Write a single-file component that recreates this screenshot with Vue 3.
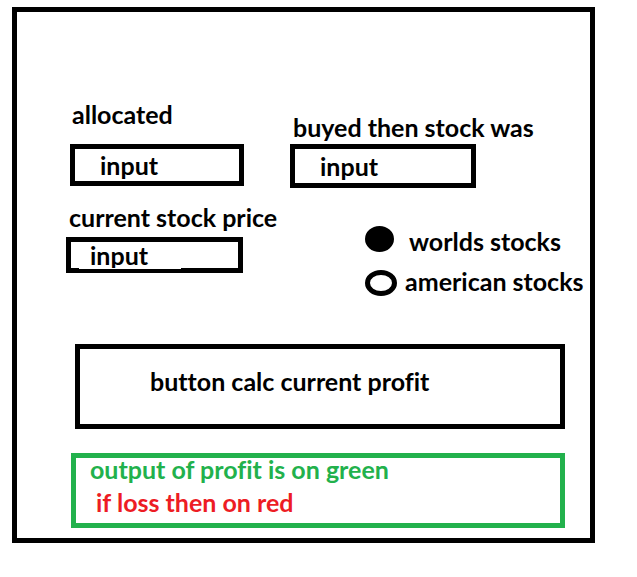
<script setup>
import { ref } from 'vue'

const allocated = ref('input')
const bought = ref('input')
const current = ref('input')
const market = ref('worlds')
</script>

<template>
  <main class="frame">
    <form @submit.prevent>
      <div class="fields">
        <div class="column">
          <label class="caption caption-inset" for="allocated">allocated</label>
          <input id="allocated" v-model="allocated" class="box box-allocated" type="text" />
          <label class="caption caption-current" for="current">current stock price</label>
          <div class="current">
            <input id="current" v-model="current" class="box box-current" type="text" />
          </div>
        </div>
        <div class="column column-right">
          <label class="caption" for="bought">buyed then stock was</label>
          <input id="bought" v-model="bought" class="box box-bought" type="text" />
          <div class="markets" role="radiogroup" aria-label="market">
            <label class="market market-worlds">
              <input v-model="market" type="radio" name="market" value="worlds" />
              <span>worlds stocks</span>
            </label>
            <label class="market">
              <input v-model="market" type="radio" name="market" value="american" />
              <span>american stocks</span>
            </label>
          </div>
        </div>
      </div>
      <button class="calc" type="submit">button calc current profit</button>
      <output class="result" for="allocated current bought">
        <span class="profit">output of profit is on green</span>
        <span class="loss">if loss then on red</span>
      </output>
    </form>
  </main>
</template>

<style>
body {
  margin: 0;
  background: #fff;
}
</style>

<style scoped>
.frame,
.frame * {
  box-sizing: border-box;
}

.frame {
  margin: 7px 42px 0 12px;
  padding: 87px 0 10px;
  border: 5px solid #000;
  color: #000;
  font: bold 25px/30px Lato, "Open Sans", sans-serif;
  font-variant-ligatures: none;
}

.fields {
  display: grid;
  grid-template-columns: minmax(0, 224fr) minmax(0, 300fr);
  padding-left: 49px;
}

.column {
  display: flex;
  flex-direction: column;
  align-items: flex-start;
}

.column-right {
  padding-top: 13px;
}

.caption {
  padding-left: 3px;
  white-space: nowrap;
}

.caption-inset {
  margin-bottom: 15px;
  padding-left: 6px;
}

.caption-current {
  margin: 16px 0 5px;
}

.box {
  max-width: 100%;
  margin: 0;
  padding: 0 0 0 25px;
  border: 5px solid #000;
  border-radius: 0;
  background: #fff;
  color: inherit;
  font: inherit;
  outline: none;
}

.box-allocated {
  width: 174px;
  height: 42px;
  margin-left: 4px;
  padding-bottom: 1px;
}

.box-bought {
  width: 186px;
  height: 44px;
  margin-top: 2px;
}

.current {
  position: relative;
}

.box-current {
  display: block;
  width: 177px;
  height: 36px;
  padding-left: 19px;
}

/* thinner stretch of the lower border under the value */
.current::after {
  content: "";
  position: absolute;
  left: 13px;
  bottom: 4px;
  width: 102px;
  height: 1px;
  background: #fff;
}

.markets {
  display: flex;
  flex-direction: column;
  gap: 10px;
  padding: 38px 0 0 75px;
}

.market {
  display: flex;
  align-items: flex-end;
  gap: 8px;
  white-space: nowrap;
}

.market input {
  flex: none;
  width: 32px;
  height: 26px;
  margin: 0;
  border: 5px solid #000;
  border-radius: 50%;
  appearance: none;
  background: #fff;
}

.market-worlds {
  align-items: flex-start;
  gap: 15px;
}

.market-worlds input {
  width: 29px;
}

.market input:checked {
  background: #000;
}

.calc {
  display: block;
  width: calc(100% - 83px);
  height: 85px;
  margin: 48px 25px 0 58px;
  padding: 0 0 12px 70px;
  border: 5px solid #000;
  border-radius: 0;
  background: #fff;
  color: inherit;
  font: inherit;
  font-variant-ligatures: none;
  text-align: left;
}

.result {
  display: flex;
  flex-direction: column;
  gap: 11px;
  margin: 24px 25px 0 54px;
  padding: 0 14px 10px;
  border: 5px solid #22b14c;
  line-height: 22px;
}

.profit {
  color: #22b14c;
}

.loss {
  padding-left: 6px;
  color: #ed1c24;
}
</style>
